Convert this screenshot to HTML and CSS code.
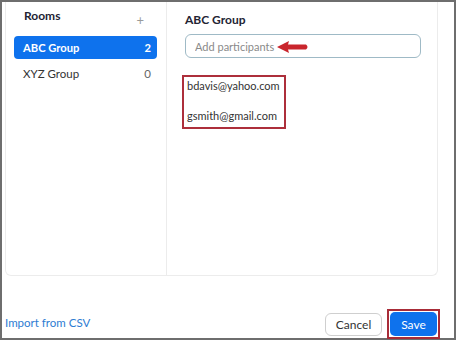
FILE: index.html
```html
<!DOCTYPE html>
<html lang="en">
<head>
    <meta charset="UTF-8">
    <title>Rooms</title>
    <link rel="stylesheet" href="styles.css">
</head>
<body>
    <div class="dialog">
        <div class="panel">
            <div class="rooms">
                <div class="rooms-head">
                    <span class="rooms-title">Rooms</span>
                    <span class="add">+</span>
                </div>
                <div class="room selected">
                    <span>ABC Group</span>
                    <span>2</span>
                </div>
                <div class="room">
                    <span>XYZ Group</span>
                    <span class="count">0</span>
                </div>
            </div>
            <div class="detail">
                <h2>ABC Group</h2>
                <div class="field">
                    <input type="text" placeholder="Add participants">
                    <svg class="arrow" width="32" height="12" viewBox="0 0 32 12">
                        <path d="M0 6 L12 0 L11 3.5 L29 3.5 Q32 6 29 8.5 L11 8.5 L12 12 Z" fill="#c9252c"/>
                    </svg>
                </div>
                <div class="people">
                    <div>bdavis@yahoo.com</div>
                    <div class="second">gsmith@gmail.com</div>
                </div>
            </div>
        </div>
        <div class="footer">
            <a href="#" class="import">Import from CSV</a>
            <button class="cancel">Cancel</button>
            <div class="mark">
                <button class="save">Save</button>
            </div>
        </div>
    </div>
</body>
</html>
```
FILE: styles.css
```css
body {
    margin: 0;
    font-family: Lato, "Open Sans", sans-serif;
    color: #232333;
}

.dialog {
    width: 456px;
    height: 340px;
    box-sizing: border-box;
    border: 2px solid #6e6e6e;
    background: #ffffff;
    display: flex;
    flex-direction: column;
}

.panel {
    margin: 0 16px 0 3px;
    height: 274px;
    box-sizing: border-box;
    border: 1px solid #ececec;
    border-top: none;
    border-radius: 0 0 6px 6px;
    display: grid;
    grid-template-columns: 161px 1fr;
}

.rooms {
    border-right: 1px solid #ececec;
    padding: 0 9px 0 8px;
}

.rooms-head {
    display: flex;
    justify-content: space-between;
    align-items: flex-start;
    height: 34px;
    padding: 6px 13px 0 10px;
    box-sizing: border-box;
}

.rooms-title {
    font-size: 12px;
    font-weight: bold;
    line-height: 16px;
}

.add {
    color: #9a9a9a;
    font-size: 13px;
    line-height: 16px;
    margin-top: 4px;
}

.room {
    height: 23px;
    display: flex;
    justify-content: space-between;
    align-items: center;
    padding: 0 6px 0 9px;
    border-radius: 4px;
    font-size: 11.5px;
    color: #333333;
    margin-bottom: 3px;
}

.room.selected {
    background: #0e72ed;
    color: #ffffff;
    font-weight: bold;
    font-size: 11.2px;
}

.room .count {
    color: #666666;
}

.detail {
    padding: 9px 16px 0 18px;
}

.detail h2 {
    margin: 0 0 5px 0;
    font-size: 12px;
    line-height: 18px;
    font-weight: bold;
}

.field {
    position: relative;
}

.field input {
    width: 100%;
    height: 24px;
    box-sizing: border-box;
    border: 1px solid #9fbac6;
    border-radius: 6px;
    padding: 0 9px;
    font-family: inherit;
    font-size: 11px;
}

.field input::placeholder {
    color: #8a8a8a;
}

.arrow {
    position: absolute;
    left: 92px;
    top: 7px;
}

.people {
    margin: 17px 0 0 -3px;
    width: 104px;
    box-sizing: border-box;
    border: 2px solid #ad2f3b;
    padding: 0 0 2px 3px;
    font-size: 11px;
    line-height: 18px;
    color: #333333;
}

.people .second {
    margin-top: 12px;
}

.footer {
    flex: 1;
    display: flex;
    align-items: flex-end;
    padding: 0 14px 0 3px;
}

.import {
    color: #2d7cd2;
    font-size: 11.5px;
    line-height: 16px;
    text-decoration: none;
    margin-bottom: 7px;
    margin-right: auto;
}

.cancel {
    width: 57px;
    height: 23px;
    background: #ffffff;
    border: 1px solid #cfcfcf;
    border-radius: 6px;
    font-family: inherit;
    font-size: 12px;
    color: #333333;
    margin: 0 5px 2px 0;
    padding: 0;
}

.mark {
    border: 2px solid #a82c38;
    padding: 1px;
    margin-bottom: -1px;
}

.save {
    display: block;
    width: 47px;
    height: 24px;
    background: #0e72ed;
    color: #ffffff;
    border: none;
    border-radius: 5px;
    font-family: inherit;
    font-size: 12px;
    padding: 0;
}
```
